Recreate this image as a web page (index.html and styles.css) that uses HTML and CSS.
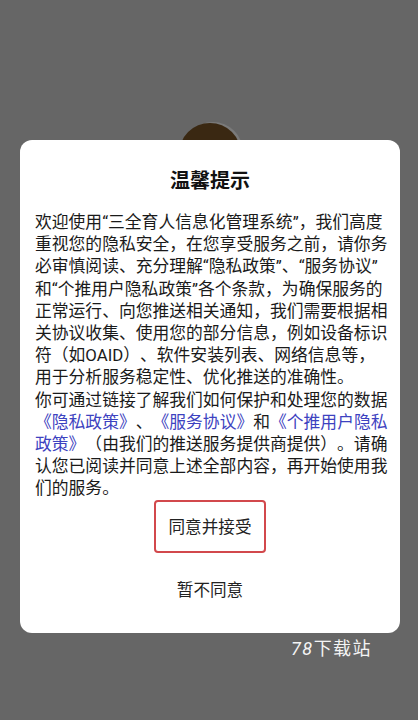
FILE: index.html
```html
<!DOCTYPE html>
<html lang="zh-CN">
<head>
<meta charset="utf-8">
<title>温馨提示</title>
<link rel="stylesheet" href="styles.css">
</head>
<body>
<div class="page">
  <div class="avatar"></div>
</div>
<div class="overlay">
  <div class="dialog">
    <h1 class="title">温馨提示</h1>
    <p class="content">欢迎使用“三全育人信息化管理系统”，我们高度<br>重视您的隐私安全，在您享受服务之前，请你务<br>必审慎阅读、充分理解“隐私政策”、“服务协议”<br>和“个推用户隐私政策”各个条款，为确保服务的<br>正常运行、向您推送相关通知，我们需要根据相<br>关协议收集、使用您的部分信息，例如设备标识<br>符（如OAID）、软件安装列表、网络信息等，<br>用于分析服务稳定性、优化推送的准确性。<br>你可通过链接了解我们如何保护和处理您的数据<br><span class="link">《隐私政策》</span>、<span class="link">《服务协议》</span>和<span class="link">《个推用户隐私<br>政策》</span>（由我们的推送服务提供商提供）。请确<br>认您已阅读并同意上述全部内容，再开始使用我<br>们的服务。</p>
    <div class="actions">
      <button class="btn btn-accept">同意并接受</button>
      <button class="btn btn-reject">暂不同意</button>
    </div>
  </div>
  <div class="watermark"><span class="wm-num">78</span>下载站</div>
</div>
</body>
</html>
```

FILE: styles.css
```css
html, body {
  margin: 0;
  padding: 0;
}
body {
  width: 418px;
  height: 720px;
  background: #666666;
  font-family: Roboto, "Noto Sans CJK SC", sans-serif;
  position: relative;
  overflow: hidden;
}
.page {
  display: flex;
  flex-direction: column;
  align-items: center;
  padding-top: 123px;
}
.avatar {
  width: 62px;
  height: 62px;
  border-radius: 50%;
  background: #3a2812;
  box-shadow: 3px -2px 0 -1px #7a7a7a;
  margin-left: 2px;
}
.overlay {
  position: absolute;
  inset: 0;
  display: flex;
  flex-direction: column;
  align-items: flex-start;
  padding: 140px 0 0 20px;
}
.dialog {
  width: 380px;
  height: 493px;
  box-sizing: border-box;
  background: #ffffff;
  border-radius: 12px;
  padding: 27px 15px 0 15px;
  display: flex;
  flex-direction: column;
  align-items: center;
}
.title {
  margin: 0;
  font-size: 20px;
  line-height: 28px;
  font-weight: 700;
  color: #111111;
}
.content {
  margin: 16px 0 0 0;
  width: 350px;
  font-size: 16.8px;
  line-height: 22.2px;
  color: #1a1a1a;
  white-space: nowrap;
  text-spacing-trim: space-all;
  font-feature-settings: "palt" 0;
}
.link {
  color: #3d42c0;
}
.actions {
  display: flex;
  flex-direction: column;
  align-items: center;
  gap: 10px;
  margin-top: 0;
}
.btn {
  font-family: Roboto, "Noto Sans CJK SC", sans-serif;
  font-size: 16.6px;
  color: #222222;
  background: #ffffff;
  height: 53px;
  padding: 0;
  border-radius: 4px;
  cursor: pointer;
}
.btn-accept {
  width: 112px;
  border: 2px solid #d2484c;
}
.btn-reject {
  width: 112px;
  border: 2px solid transparent;
}
.watermark {
  margin: 4px 0 0 271px;
  font-size: 18px;
  line-height: 24px;
  letter-spacing: 1.5px;
  color: #f4f4f4;
}
.wm-num {
  font-style: italic;
}
```
